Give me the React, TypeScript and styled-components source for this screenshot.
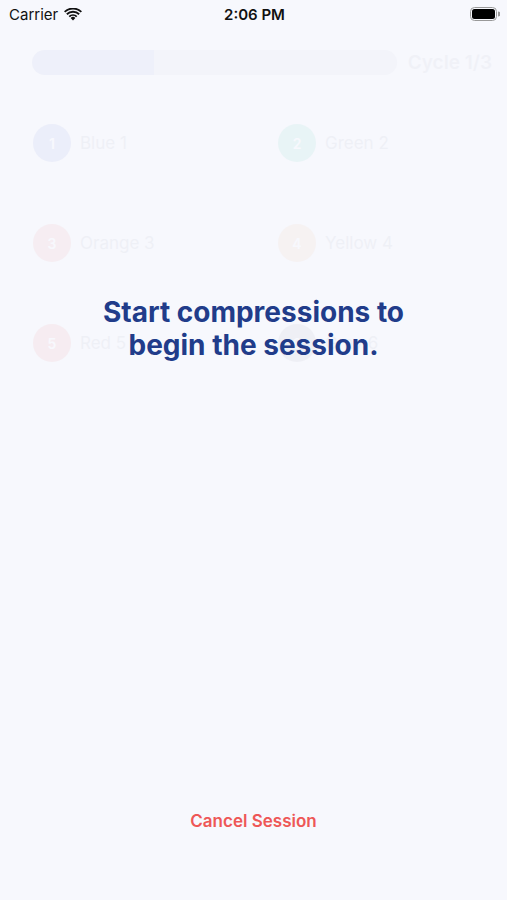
import React from 'react'
import styled, { createGlobalStyle } from 'styled-components'

const GlobalStyle = createGlobalStyle`
  html, body {
    margin: 0;
    padding: 0;
    background: #f7f8fd;
  }
  body {
    font-family: Inter, "Noto Sans", "Liberation Sans", sans-serif;
  }
  * {
    box-sizing: border-box;
  }
`

const Screen = styled.div`
  position: relative;
  width: 507px;
  height: 900px;
  background: #f7f8fd;
  overflow: hidden;
`

const StatusBar = styled.div`
  height: 28px;
  display: grid;
  grid-template-columns: 1fr auto 1fr;
  align-items: center;
  padding: 0 7px 0 9px;
  color: #111;
  font-size: 15px;
`

const Carrier = styled.div`
  display: flex;
  align-items: center;
  gap: 6px;
`

const Clock = styled.div`
  font-weight: 600;
`

const Battery = styled.div`
  justify-self: end;
  display: flex;
  align-items: center;
`

const Underlay = styled.div`
  opacity: 0.09;
`

const Header = styled.div`
  display: flex;
  align-items: center;
  gap: 11px;
  padding: 22px 15px 0 32px;
`

const Track = styled.div`
  flex: 1;
  height: 25px;
  border-radius: 13px;
  background: #cdd0e0;
  overflow: hidden;
`

const Fill = styled.div`
  height: 100%;
  background: #9da8df;
  border-radius: 13px 0 0 13px;
`

const CycleLabel = styled.div`
  font-size: 19px;
  font-weight: 600;
  color: #b0b5c6;
`

const Grid = styled.div`
  display: grid;
  grid-template-columns: 245px 1fr;
  grid-auto-rows: 100px;
  padding: 49px 0 0 33px;
`

const Item = styled.div`
  display: flex;
  align-items: center;
  gap: 9px;
  height: 38px;
`

const Dot = styled.div<{ $color: string }>`
  width: 38px;
  height: 38px;
  border-radius: 50%;
  background: ${(p) => p.$color};
  color: #fff;
  font-size: 14px;
  font-weight: 600;
  display: flex;
  align-items: center;
  justify-content: center;
`

const ItemLabel = styled.div`
  font-size: 17px;
  color: #a0a5b6;
`

const Prompt = styled.div`
  position: absolute;
  left: 0;
  right: 0;
  top: 296px;
  text-align: center;
  font-size: 28px;
  font-weight: 700;
  line-height: 33px;
  color: #213c8a;
`

const CancelButton = styled.button`
  position: absolute;
  left: 0;
  right: 0;
  top: 811px;
  margin: 0 auto;
  width: fit-content;
  background: none;
  border: none;
  padding: 0;
  font-family: inherit;
  font-size: 17px;
  font-weight: 600;
  color: #ee5757;
  cursor: pointer;
`

const items = [
  { n: 1, label: 'Blue 1', color: '#7f8fde' },
  { n: 2, label: 'Green 2', color: '#5fd0b8' },
  { n: 3, label: 'Orange 3', color: '#f08a8a' },
  { n: 4, label: 'Yellow 4', color: '#f2b890' },
  { n: 5, label: 'Red 5', color: '#f08080' },
  { n: 6, label: 'Gray 6', color: '#9fa1b0' },
]

const WifiIcon = () => (
  <svg width="18" height="13" viewBox="0 0 18 13">
    <path d="M9 12.5 L6.6 10 A3.4 3.4 0 0 1 11.4 10 Z" fill="#111" />
    <path d="M4.6 8 A6.3 6.3 0 0 1 13.4 8 L12.1 9.3 A4.5 4.5 0 0 0 5.9 9.3 Z" fill="#111" />
    <path d="M2.2 5.6 A9.7 9.7 0 0 1 15.8 5.6 L14.5 6.9 A7.9 7.9 0 0 0 3.5 6.9 Z" fill="#111" />
    <path d="M0 3.3 A12.8 12.8 0 0 1 18 3.3 L16.7 4.6 A11 11 0 0 0 1.3 4.6 Z" fill="#111" />
  </svg>
)

const BatteryIcon = () => (
  <svg width="30" height="14" viewBox="0 0 30 14">
    <rect x="0.5" y="0.5" width="26" height="13" rx="4" fill="none" stroke="#999" />
    <rect x="2" y="2" width="23" height="10" rx="2.5" fill="#000" />
    <path d="M28 4.5 a1.5 1.5 0 0 1 0 5 Z" fill="#999" />
  </svg>
)

export default function App() {
  return (
    <Screen>
      <GlobalStyle />
      <StatusBar>
        <Carrier>
          Carrier
          <WifiIcon />
        </Carrier>
        <Clock>2:06 PM</Clock>
        <Battery>
          <BatteryIcon />
        </Battery>
      </StatusBar>

      <Underlay>
        <Header>
          <Track>
            <Fill style={{ width: `${(1 / 3) * 100}%` }} />
          </Track>
          <CycleLabel>Cycle 1/3</CycleLabel>
        </Header>
        <Grid>
          {items.map((it) => (
            <Item key={it.n}>
              <Dot $color={it.color}>{it.n}</Dot>
              <ItemLabel>{it.label}</ItemLabel>
            </Item>
          ))}
        </Grid>
      </Underlay>

      <Prompt>
        Start compressions to
        <br />
        begin the session.
      </Prompt>

      <CancelButton>Cancel Session</CancelButton>
    </Screen>
  )
}
